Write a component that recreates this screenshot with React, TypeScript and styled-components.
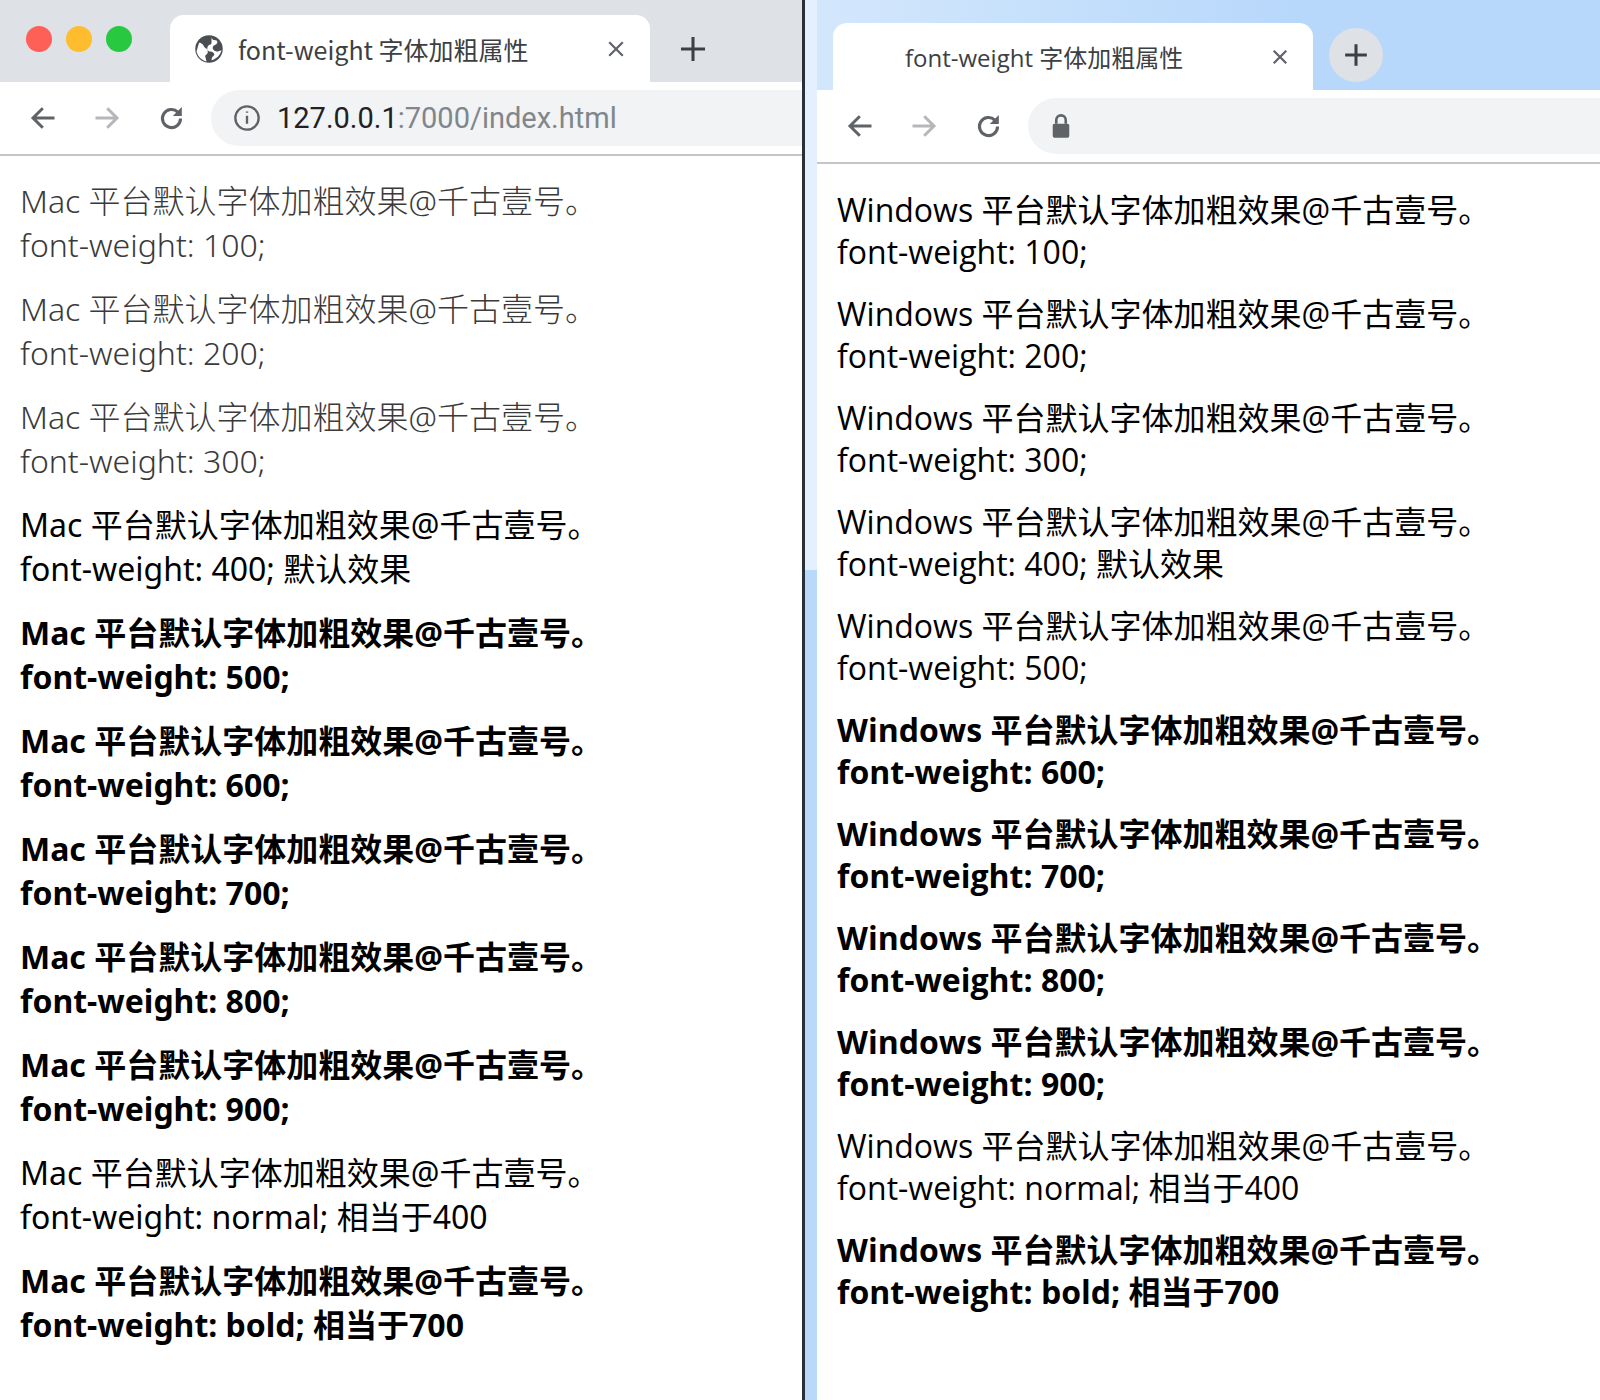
import React from 'react';
import styled, { createGlobalStyle } from 'styled-components';

const Global = createGlobalStyle`
  html, body { margin: 0; padding: 0; background: #fff; }
  body { font-family: "Noto Sans CJK SC", "Noto Sans", sans-serif; }
`;

const Screen = styled.div`
  display: flex;
  width: 1600px;
  height: 1400px;
  overflow: hidden;
`;

const MacWindow = styled.div`
  width: 802px;
  flex: none;
  display: flex;
  flex-direction: column;
  background: #fff;
`;

const Split = styled.div`
  width: 3px;
  flex: none;
  background: #2b2f36;
`;

const WinWindow = styled.div`
  flex: 1;
  display: flex;
  flex-direction: column;
  background: #fff;
  border-left: 12px solid #b9d9fb;
  position: relative;
  &::before {
    content: '';
    position: absolute;
    left: -12px;
    top: 0;
    width: 12px;
    height: 570px;
    background: #e4f0fd;
  }
`;

const TabStrip = styled.div<{ $win?: boolean }>`
  height: ${p => (p.$win ? 90 : 82)}px;
  flex: none;
  display: flex;
  align-items: flex-end;
  padding-left: ${p => (p.$win ? 16 : 0)}px;
  background: ${p => (p.$win ? 'linear-gradient(90deg, #d3e7fc 0%, #b8d8fb 60%)' : '#dee1e6')};
`;

const Lights = styled.div`
  display: flex;
  gap: 14px;
  padding: 0 38px 0 26px;
  align-self: center;
  margin-top: -4px;
`;

const Light = styled.span<{ $c: string }>`
  width: 26px;
  height: 26px;
  border-radius: 50%;
  background: ${p => p.$c};
`;

const Tab = styled.div<{ $win?: boolean }>`
  width: 480px;
  height: 67px;
  background: #fff;
  border-radius: 14px 14px 0 0;
  display: flex;
  align-items: center;
  padding: 0 22px 0 ${p => (p.$win ? 72 : 24)}px;
  box-sizing: border-box;
  gap: 14px;
`;

const TabTitle = styled.span<{ $win?: boolean }>`
  flex: 1;
  font-size: ${p => (p.$win ? 24 : 25)}px;
  color: #3c4043;
  font-family: ${p => (p.$win ? '"Open Sans", ' : '')}"Noto Sans CJK SC", sans-serif;
  white-space: nowrap;
`;

const NewTab = styled.div<{ $win?: boolean }>`
  width: 54px;
  height: 54px;
  margin: 0 0 ${p => (p.$win ? 8 : 6)}px 16px;
  border-radius: 50%;
  background: ${p => (p.$win ? '#dee1e6' : 'transparent')};
  display: flex;
  align-items: center;
  justify-content: center;
`;

const Toolbar = styled.div`
  height: 72px;
  flex: none;
  display: flex;
  align-items: center;
  gap: 34px;
  padding-left: 28px;
  border-bottom: 2px solid #c4c6c9;
`;

const Omnibox = styled.div`
  flex: 1;
  height: 56px;
  border-radius: 28px 0 0 28px;
  background: #f1f3f4;
  display: flex;
  align-items: center;
  gap: 16px;
  padding-left: 22px;
  margin-left: -10px;
`;

const Url = styled.span`
  font-size: 29px;
  color: #202124;
  font-family: "Roboto", "Noto Sans", sans-serif;
  span { color: #80868b; }
`;

const Content = styled.div<{ $win?: boolean }>`
  padding: ${p => (p.$win ? '25px 0 0 20px' : '23px 0 0 20px')};
  display: flex;
  flex-direction: column;
  gap: 20px;
`;

const Line = styled.p<{ $w: number; $win?: boolean }>`
  margin: 0;
  font-size: 32px;
  line-height: ${p => (p.$win ? 42 : 44)}px;
  font-weight: ${p => p.$w};
  color: ${p => (p.$w < 400 ? '#3a3a3a' : '#000')};
  font-family: ${p => (p.$win ? '"Open Sans", ' : '"Noto Sans", ')}"Noto Sans CJK SC", sans-serif;
  white-space: nowrap;
`;

const Ico = ({ d, c = '#5f6368', s = 30, w = 2.4 }: { d: string; c?: string; s?: number; w?: number }) => (
  <svg width={s} height={s} viewBox="0 0 24 24" fill="none" stroke={c} strokeWidth={w} strokeLinecap="square">
    <path d={d} />
  </svg>
);

const back = 'M20 12H5M11 5l-7 7 7 7';
const fwd = 'M4 12h15M13 5l7 7-7 7';

const Reload = () => (
  <svg width="31" height="31" viewBox="0 0 24 24" fill="none">
    <path d="M19 12a7 7 0 1 1-2.1-5" stroke="#5f6368" strokeWidth="2.4" />
    <path d="M20 3v7h-7z" fill="#5f6368" />
  </svg>
);

const Globe = () => (
  <svg width="30" height="30" viewBox="0 0 24 24">
    <circle cx="12" cy="12" r="11" fill="#4a4d52" />
    <path d="M4 7c2 0 3 1 4 3s3 1 3 4-2 2-2 4l1 4c-4-1-7-4-8-8zM14 2c0 2 1 3 3 3s2 2 1 3-3 1-3 3 2 3 4 3l3-1c-1 4-4 7-8 8 0-2 1-3 2-4s-1-3-3-3-3-2-2-4 3-1 3-3z" fill="#fff" />
  </svg>
);

const Info = () => (
  <svg width="28" height="28" viewBox="0 0 24 24" fill="none" stroke="#5f6368" strokeWidth="2">
    <circle cx="12" cy="12" r="10" />
    <path d="M12 10v7M12 6.5v1" />
  </svg>
);

const Lock = () => (
  <svg width="22" height="26" viewBox="0 0 18 22">
    <path d="M5 9V6a4 4 0 0 1 8 0v3" stroke="#5f6368" strokeWidth="2.2" fill="none" />
    <rect x="2" y="9" width="14" height="12" rx="1.5" fill="#5f6368" />
  </svg>
);

// [value, mac weight, windows weight]
const weights: [string, number, number][] = [
  ['100;', 300, 400],
  ['200;', 300, 400],
  ['300;', 300, 400],
  ['400; 默认效果', 400, 400],
  ['500;', 700, 400],
  ['600;', 700, 700],
  ['700;', 700, 700],
  ['800;', 700, 700],
  ['900;', 700, 700],
  ['normal; 相当于400', 400, 400],
  ['bold; 相当于700', 700, 700],
];

export default function App() {
  return (
    <>
      <Global />
      <Screen>
        <MacWindow>
          <TabStrip>
            <Lights>
              <Light $c="#fe5f57" />
              <Light $c="#febc2e" />
              <Light $c="#28c840" />
            </Lights>
            <Tab>
              <Globe />
              <TabTitle>font-weight 字体加粗属性</TabTitle>
              <Ico d="M6 6l12 12M18 6L6 18" s={24} w={2.2} />
            </Tab>
            <NewTab><Ico d="M12 3v18M3 12h18" c="#3c4043" s={28} w={2.6} /></NewTab>
          </TabStrip>
          <Toolbar>
            <Ico d={back} />
            <Ico d={fwd} c="#b5b7ba" />
            <Reload />
            <Omnibox>
              <Info />
              <Url>127.0.0.1<span>:7000/index.html</span></Url>
            </Omnibox>
          </Toolbar>
          <Content>
            {weights.map(([v, mac]) => (
              <div key={v}>
                <Line $w={mac}>Mac 平台默认字体加粗效果@千古壹号。</Line>
                <Line $w={mac}>font-weight: {v}</Line>
              </div>
            ))}
          </Content>
        </MacWindow>
        <Split />
        <WinWindow>
          <TabStrip $win>
            <Tab $win>
              <TabTitle $win>font-weight 字体加粗属性</TabTitle>
              <Ico d="M6 6l12 12M18 6L6 18" s={22} w={2.4} />
            </Tab>
            <NewTab $win><Ico d="M12 4v16M4 12h16" c="#3c4043" s={28} w={2.6} /></NewTab>
          </TabStrip>
          <Toolbar>
            <Ico d={back} />
            <Ico d={fwd} c="#b5b7ba" />
            <Reload />
            <Omnibox><Lock /></Omnibox>
          </Toolbar>
          <Content $win>
            {weights.map(([v, , win]) => (
              <div key={v}>
                <Line $win $w={win}>Windows 平台默认字体加粗效果@千古壹号。</Line>
                <Line $win $w={win}>font-weight: {v}</Line>
              </div>
            ))}
          </Content>
        </WinWindow>
      </Screen>
    </>
  );
}
